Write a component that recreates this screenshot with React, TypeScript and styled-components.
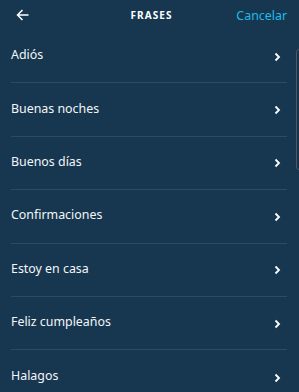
import React from "react";
import styled, { createGlobalStyle } from "styled-components";

const Global = createGlobalStyle`
  html, body { margin: 0; padding: 0; background: #173751; }
  body { font-family: "Noto Sans", "Open Sans", sans-serif; }
`;

const Screen = styled.div`
  position: relative;
  width: 299px;
  height: 392px;
  overflow: hidden;
  background: #173751;
  color: #ffffff;
`;

const Header = styled.div`
  display: grid;
  grid-template-columns: 1fr auto 1fr;
  align-items: center;
  height: 30px;
  padding: 0 12px 0 16px;
`;

const BackButton = styled.div`
  display: flex;
  align-items: center;
  justify-self: start;
`;

const Title = styled.div`
  font-size: 10px;
  font-weight: 700;
  letter-spacing: 1.1px;
  color: #ffffff;
`;

const Cancel = styled.div`
  justify-self: end;
  font-size: 12.4px;
  color: #1ebbe6;
`;

const List = styled.div`
  display: flex;
  flex-direction: column;
  padding: 0 0 0 11px;
`;

const Row = styled.div<{ $last?: boolean }>`
  box-sizing: border-box;
  display: flex;
  align-items: center;
  justify-content: space-between;
  height: 53.4px;
  padding: 0 6px 3px 0;
  margin-right: 12px;
  border-bottom: ${(p) => (p.$last ? "none" : "1px solid #2b4a63")};
  font-size: 12.4px;
  color: #f4f6f8;
`;

const Label = styled.span``;

const ChevronBox = styled.span`
  display: flex;
  padding-top: 4px;
`;

const ScrollThumb = styled.div`
  position: absolute;
  left: 296px;
  top: 49px;
  width: 8px;
  height: 119px;
  border: 1px solid #4a5a6a;
  border-radius: 3px;
  background: #1c3148;
`;

const items = [
  "Adiós",
  "Buenas noches",
  "Buenos días",
  "Confirmaciones",
  "Estoy en casa",
  "Feliz cumpleaños",
  "Halagos",
];

const Chevron = () => (
  <ChevronBox>
    <svg width="7" height="10" viewBox="0 0 7 10">
      <path d="M1.5 1.5 L5 5 L1.5 8.5" fill="none" stroke="#ffffff" strokeWidth="1.8" />
    </svg>
  </ChevronBox>
);

export default function App() {
  return (
    <Screen>
      <Global />
      <Header>
        <BackButton>
          <svg width="13" height="12" viewBox="0 0 13 12">
            <path d="M12.5 6 H1.5 M6.5 1 L1.5 6 L6.5 11" fill="none" stroke="#ffffff" strokeWidth="1.5" />
          </svg>
        </BackButton>
        <Title>FRASES</Title>
        <Cancel>Cancelar</Cancel>
      </Header>
      <List>
        {items.map((t, i) => (
          <Row key={t} $last={i === items.length - 1}>
            <Label>{t}</Label>
            <Chevron />
          </Row>
        ))}
      </List>
      <ScrollThumb />
    </Screen>
  );
}
